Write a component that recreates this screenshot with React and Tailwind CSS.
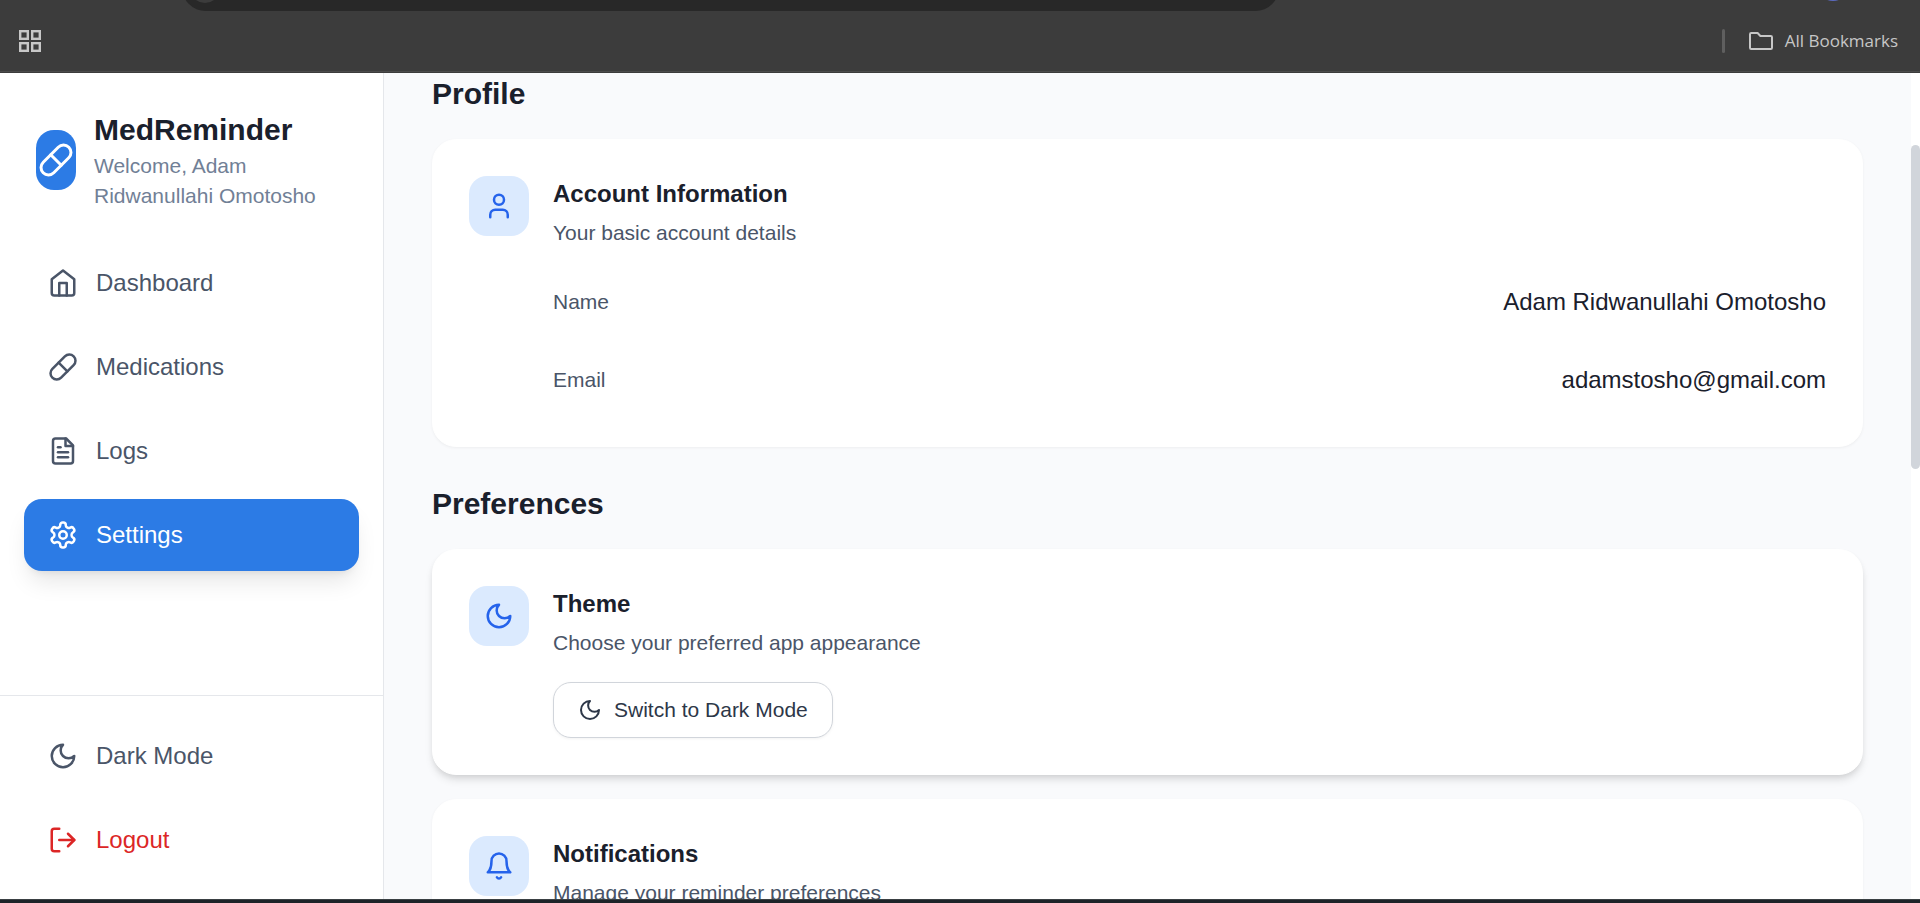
import React from "react";

function Icon({ className, children }) {
  return (
    <svg
      viewBox="0 0 24 24"
      fill="none"
      stroke="currentColor"
      strokeWidth="2"
      strokeLinecap="round"
      strokeLinejoin="round"
      aria-hidden="true"
      className={`shrink-0 ${className}`}
    >
      {children}
    </svg>
  );
}

const HomeIcon = ({ className }) => (
  <Icon className={className}>
    <path d="m3 9 9-7 9 7v11a2 2 0 0 1-2 2H5a2 2 0 0 1-2-2z" />
    <polyline points="9 22 9 12 15 12 15 22" />
  </Icon>
);

const PillIcon = ({ className }) => (
  <Icon className={className}>
    <path d="m10.5 20.5 10-10a4.95 4.95 0 1 0-7-7l-10 10a4.95 4.95 0 1 0 7 7Z" />
    <path d="m8.5 8.5 7 7" />
  </Icon>
);

const FileIcon = ({ className }) => (
  <Icon className={className}>
    <path d="M14.5 2H6a2 2 0 0 0-2 2v16a2 2 0 0 0 2 2h12a2 2 0 0 0 2-2V7.5L14.5 2z" />
    <polyline points="14 2 14 8 20 8" />
    <line x1="16" y1="13" x2="8" y2="13" />
    <line x1="16" y1="17" x2="8" y2="17" />
    <line x1="10" y1="9" x2="8" y2="9" />
  </Icon>
);

const GearIcon = ({ className }) => (
  <Icon className={className}>
    <path d="M12.22 2h-.44a2 2 0 0 0-2 2v.18a2 2 0 0 1-1 1.73l-.43.25a2 2 0 0 1-2 0l-.15-.08a2 2 0 0 0-2.73.73l-.22.38a2 2 0 0 0 .73 2.73l.15.1a2 2 0 0 1 1 1.72v.51a2 2 0 0 1-1 1.74l-.15.09a2 2 0 0 0-.73 2.73l.22.38a2 2 0 0 0 2.73.73l.15-.08a2 2 0 0 1 2 0l.43.25a2 2 0 0 1 1 1.73V20a2 2 0 0 0 2 2h.44a2 2 0 0 0 2-2v-.18a2 2 0 0 1 1-1.73l.43-.25a2 2 0 0 1 2 0l.15.08a2 2 0 0 0 2.73-.73l.22-.39a2 2 0 0 0-.73-2.73l-.15-.08a2 2 0 0 1-1-1.74v-.5a2 2 0 0 1 1-1.74l.15-.09a2 2 0 0 0 .73-2.73l-.22-.38a2 2 0 0 0-2.73-.73l-.15.08a2 2 0 0 1-2 0l-.43-.25a2 2 0 0 1-1-1.73V4a2 2 0 0 0-2-2z" />
    <circle cx="12" cy="12" r="3" />
  </Icon>
);

const MoonIcon = ({ className }) => (
  <Icon className={className}>
    <path d="M12 3a6 6 0 0 0 9 9 9 9 0 1 1-9-9Z" />
  </Icon>
);

const LogoutIcon = ({ className }) => (
  <Icon className={className}>
    <path d="M9 21H5a2 2 0 0 1-2-2V5a2 2 0 0 1 2-2h4" />
    <polyline points="16 17 21 12 16 7" />
    <line x1="21" y1="12" x2="9" y2="12" />
  </Icon>
);

const UserIcon = ({ className }) => (
  <Icon className={className}>
    <path d="M19 21v-2a4 4 0 0 0-4-4H9a4 4 0 0 0-4 4v2" />
    <circle cx="12" cy="7" r="4" />
  </Icon>
);

const BellIcon = ({ className }) => (
  <Icon className={className}>
    <path d="M6 8a6 6 0 0 1 12 0c0 7 3 9 3 9H3s3-2 3-9" />
    <path d="M10.3 21a1.94 1.94 0 0 0 3.4 0" />
  </Icon>
);

function BrowserBar() {
  return (
    <header className="relative flex h-[73px] shrink-0 items-end justify-between overflow-hidden bg-[#3c3c3c] pr-[22px] pl-[19px] font-['Open_Sans',sans-serif]">
      <div className="absolute -top-9 left-[9.5%] h-[47px] w-[57.1%] rounded-[24px] bg-[#282828]">
        <div className="absolute bottom-2 left-2 size-[30px] rounded-full bg-[#3c3c3c]" />
      </div>
      <div className="absolute -top-[31px] right-[71px] size-8 rounded-full bg-[#5c6bc0]" />
      <div className="absolute inset-x-0 bottom-px h-px bg-[#4b4b4b]" />
      <button type="button" aria-label="Apps" className="mb-[21px] text-[#c7c7c7]">
        <svg viewBox="0 0 22 22" fill="none" stroke="currentColor" strokeWidth="2.4" className="size-[22px]">
          <rect x="1.2" y="1.2" width="7.6" height="7.6" />
          <rect x="13.2" y="1.2" width="7.6" height="7.6" />
          <rect x="1.2" y="13.2" width="7.6" height="7.6" />
          <rect x="13.2" y="13.2" width="7.6" height="7.6" />
        </svg>
      </button>
      <div className="mb-5 flex items-center gap-6">
        <div className="h-6 w-[3px] rounded-full bg-[#5f5f5f]" />
        <button type="button" className="flex items-center gap-3 text-[17px] leading-6 text-[#c7c7c7]">
          <svg viewBox="0 0 24 18" fill="none" stroke="currentColor" strokeWidth="2" strokeLinejoin="round" className="h-[18px] w-6">
            <path d="M1 2.2Q1 1 2.2 1H8.6L11.4 4H21.8Q23 4 23 5.2V15.8Q23 17 21.8 17H2.2Q1 17 1 15.8Z" />
          </svg>
          All Bookmarks
        </button>
      </div>
    </header>
  );
}

const navBase = "flex w-full items-center gap-[18px] rounded-[18px] px-6 py-[18px] text-2xl leading-9";

const navItems = [
  { label: "Dashboard", Glyph: HomeIcon },
  { label: "Medications", Glyph: PillIcon },
  { label: "Logs", Glyph: FileIcon },
  { label: "Settings", Glyph: GearIcon, active: true },
];

function Sidebar() {
  return (
    <aside className="flex w-96 shrink-0 flex-col border-r border-[#e5e7eb] bg-white">
      <div className="flex items-center gap-[18px] p-9">
        <div className="flex h-15 w-10 shrink-0 items-center justify-center rounded-[18px] bg-[#2c7be5] text-white">
          <PillIcon className="size-9" />
        </div>
        <div>
          <p className="text-3xl leading-[42px] font-bold text-[#1a202c]">MedReminder</p>
          <p className="text-[21px] leading-[30px] text-[#718096]">Welcome, Adam Ridwanullahi Omotosho</p>
        </div>
      </div>
      <nav className="flex flex-1 flex-col gap-3 px-6">
        {navItems.map(({ label, Glyph, active }) => (
          <a
            key={label}
            href={`#${label.toLowerCase()}`}
            aria-current={active ? "page" : undefined}
            className={`${navBase} ${active ? "bg-[#2c7be5] text-white shadow-[0_15px_23px_-5px_rgba(0,0,0,0.1),0_6px_9px_-6px_rgba(0,0,0,0.1)]" : "text-[#4a5568]"}`}
          >
            <Glyph className="size-[30px]" />
            {label}
          </a>
        ))}
      </nav>
      <div className="flex flex-col gap-3 border-t border-[#e5e7eb] px-6 pt-6 pb-[23px]">
        <button type="button" className={`${navBase} text-[#4a5568]`}>
          <MoonIcon className="size-[30px]" />
          Dark Mode
        </button>
        <button type="button" className={`${navBase} text-[#dc2626]`}>
          <LogoutIcon className="size-[30px]" />
          Logout
        </button>
      </div>
    </aside>
  );
}

function Card({ Glyph, title, subtitle, raised, children }) {
  return (
    <article
      className={`flex items-start gap-6 rounded-3xl border border-white bg-white p-9 ${
        raised
          ? "shadow-[0_6px_9px_-1px_rgba(0,0,0,0.1),0_3px_6px_-2px_rgba(0,0,0,0.1)]"
          : "shadow-[0_1px_3px_0_rgba(0,0,0,0.05)]"
      }`}
    >
      <div className="flex size-15 shrink-0 items-center justify-center rounded-[18px] bg-[#dbeafe] text-[#2563eb]">
        <Glyph className="size-[30px]" />
      </div>
      <div className="flex-1">
        <h3 className="text-2xl leading-9 font-bold text-[#1a202c]">{title}</h3>
        <p className="mt-[6px] text-[21px] leading-[30px] text-[#4a5568]">{subtitle}</p>
        {children}
      </div>
    </article>
  );
}

const account = [
  ["Name", "Adam Ridwanullahi Omotosho"],
  ["Email", "adamstosho@gmail.com"],
];

export default function App() {
  return (
    <div className="flex h-screen flex-col overflow-hidden font-['Liberation_Sans',Arial,sans-serif]">
      <BrowserBar />
      <div className="flex min-h-0 flex-1">
        <Sidebar />
        <main className="flex min-w-0 flex-1 flex-col gap-9 overflow-hidden bg-[#f9fafc] px-12">
          <section className="flex shrink-0 flex-col gap-6">
            <h2 className="text-3xl leading-[42px] font-bold text-[#1a202c]">Profile</h2>
            <Card Glyph={UserIcon} title="Account Information" subtitle="Your basic account details">
              <dl className="mt-6 flex flex-col gap-[18px]">
                {account.map(([term, value]) => (
                  <div key={term} className="flex items-center justify-between py-3 leading-9">
                    <dt className="text-[21px] text-[#4a5568]">{term}</dt>
                    <dd className="text-2xl leading-9 text-[#1a202c]">{value}</dd>
                  </div>
                ))}
              </dl>
            </Card>
          </section>
          <section className="flex shrink-0 flex-col gap-6">
            <h2 className="text-3xl leading-[42px] font-bold text-[#1a202c]">Preferences</h2>
            <Card Glyph={MoonIcon} title="Theme" subtitle="Choose your preferred app appearance" raised>
              <button
                type="button"
                className="mt-6 flex items-center gap-3 rounded-[18px] border border-[#d1d5db] bg-white px-6 py-3 text-[21px] leading-[30px] text-[#2d3748] shadow-[0_1px_3px_0_rgba(0,0,0,0.05)]"
              >
                <MoonIcon className="size-6" />
                Switch to Dark Mode
              </button>
            </Card>
            <Card Glyph={BellIcon} title="Notifications" subtitle="Manage your reminder preferences" />
          </section>
        </main>
        <div className="w-[9px] shrink-0 rounded-t-full bg-white pt-18" aria-hidden="true">
          <div className="h-[43%] w-full rounded-full bg-[#d1d5db]" />
        </div>
      </div>
      <footer className="h-1 shrink-0 border-t border-[#3a4043] bg-[#1c2328]" />
    </div>
  );
}
